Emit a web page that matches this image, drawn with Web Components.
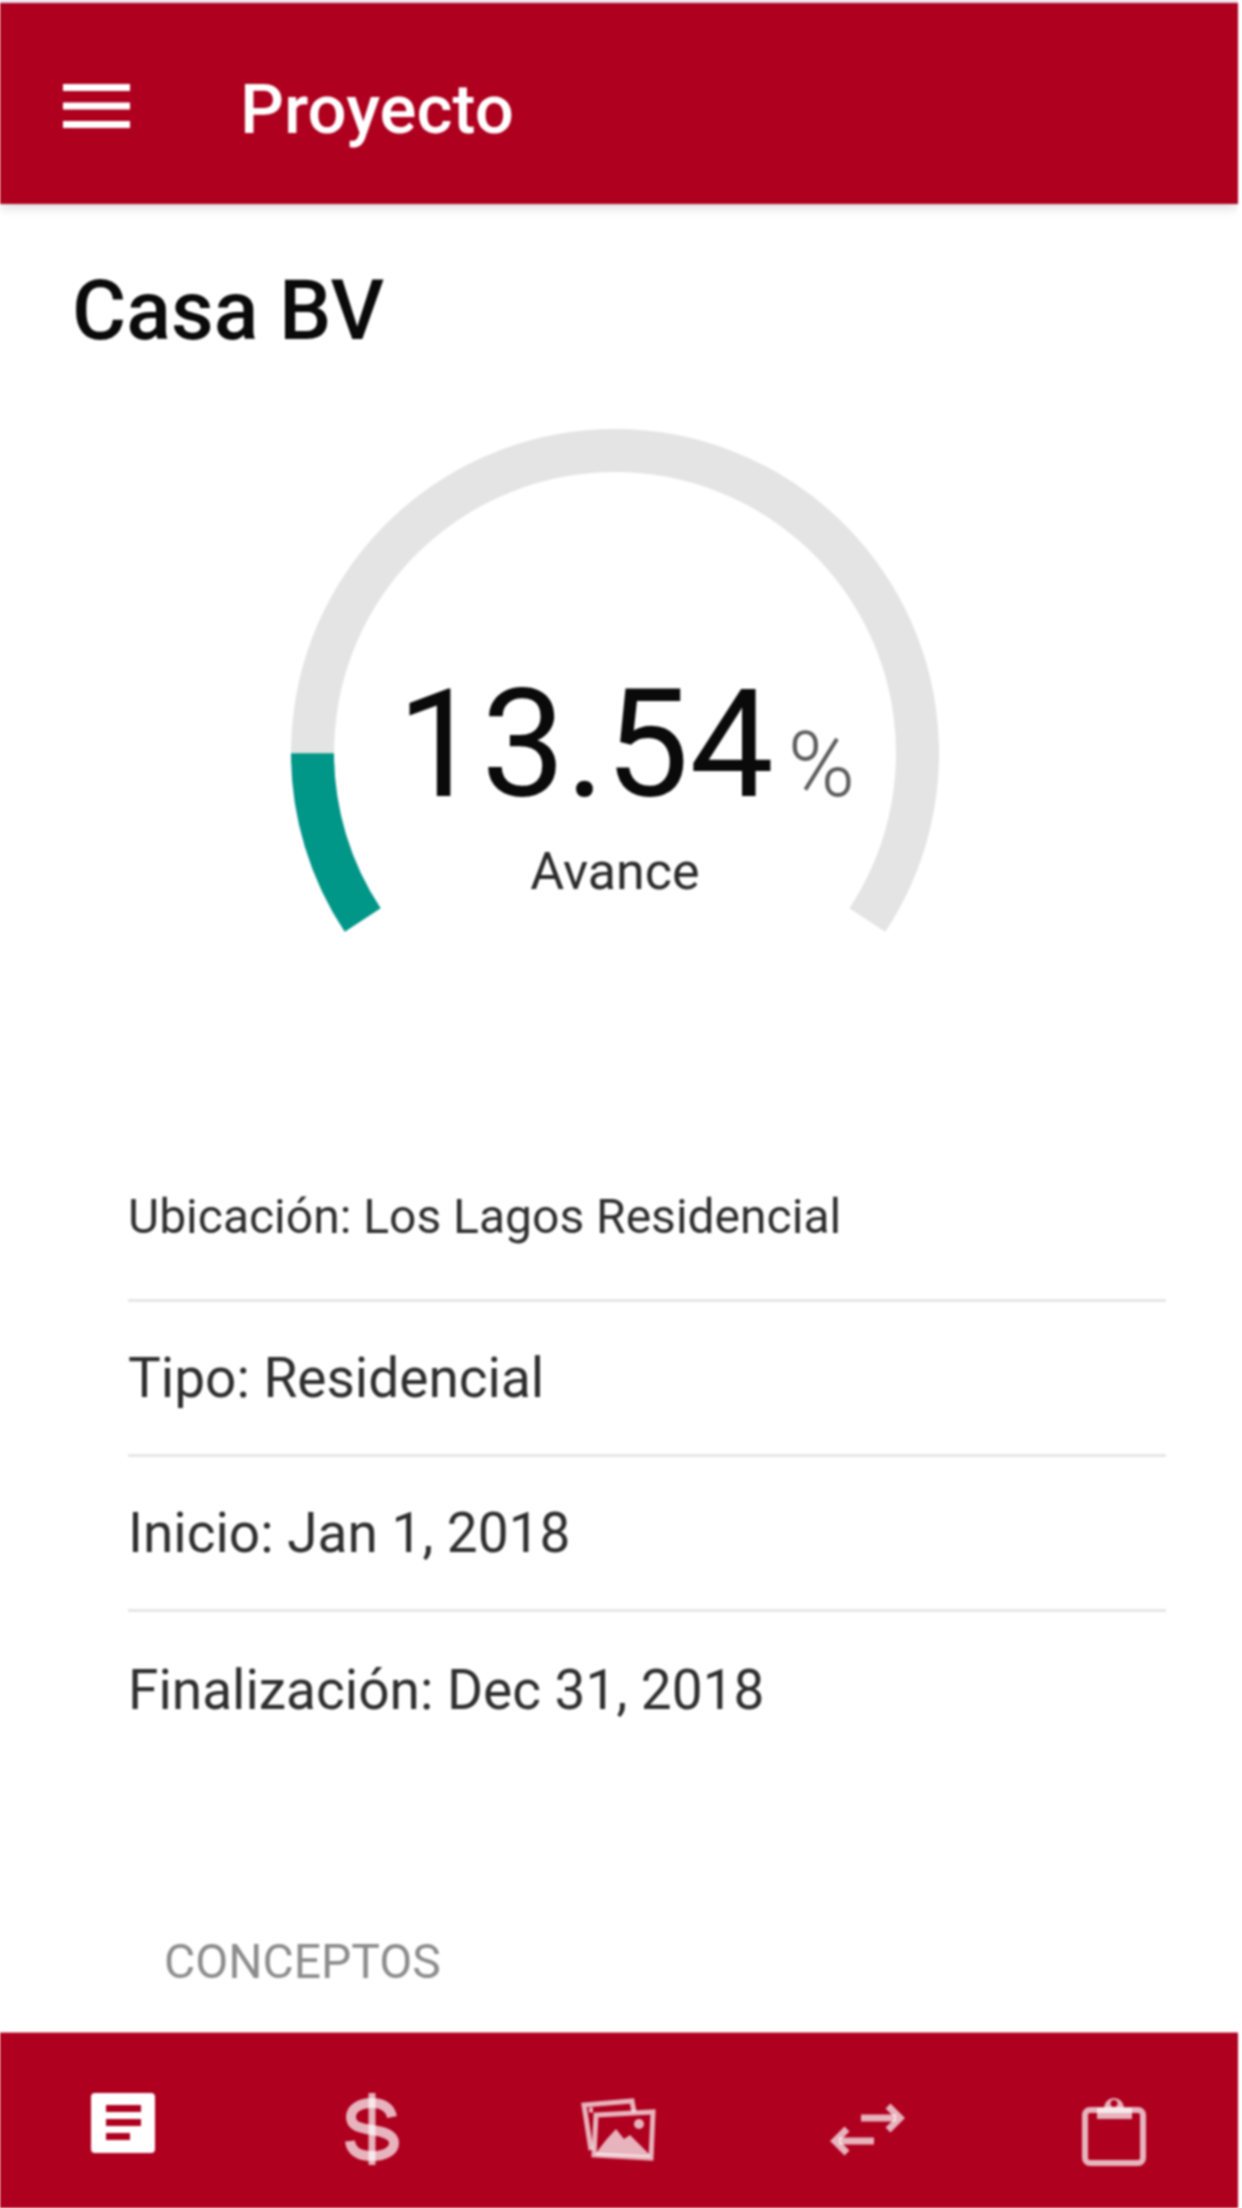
<!DOCTYPE html>
<html lang="es">
<head>
<meta charset="utf-8">
<title>Proyecto</title>
<style>
    html, body {
        margin: 0;
        padding: 0;
        background: #ffffff;
    }
</style>
</head>
<body>
<app-shell>
    <app-toolbar slot="top">Proyecto</app-toolbar>
    <project-title>Casa BV</project-title>
    <progress-gauge value="13.54" label="Avance"></progress-gauge>
    <info-list>
        <info-row small>Ubicación: Los Lagos Residencial</info-row>
        <info-row>Tipo: Residencial</info-row>
        <info-row>Inicio: Jan 1, 2018</info-row>
        <info-row last>Finalización: Dec 31, 2018</info-row>
    </info-list>
    <section-link>CONCEPTOS</section-link>
    <tab-bar slot="bottom">
        <tab-icon name="article" active></tab-icon>
        <tab-icon name="dollar"></tab-icon>
        <tab-icon name="images"></tab-icon>
        <tab-icon name="swap"></tab-icon>
        <tab-icon name="clipboard"></tab-icon>
    </tab-bar>
</app-shell>
<script>
const RED = '#af001f';

const shellTemplate = document.createElement('template');
shellTemplate.innerHTML = `
    <style>
        :host {
            display: flex;
            flex-direction: column;
            width: 1238px;
            height: 2208px;
            box-sizing: border-box;
            border-top: 3px solid #e7e0ea;
            overflow: hidden;
            background: #ffffff;
            font-family: Roboto, "Liberation Sans", sans-serif;
            filter: blur(1.1px);
        }
        .content {
            flex: 1;
            min-height: 0;
            overflow: hidden;
        }
    </style>
    <slot name="top"></slot>
    <div class="content"><slot></slot></div>
    <slot name="bottom"></slot>
`;
class AppShell extends HTMLElement {
    constructor () {
        super();
        this.attachShadow({ mode: 'open' }).appendChild(shellTemplate.content.cloneNode(true));
    }
}

const toolbarTemplate = document.createElement('template');
toolbarTemplate.innerHTML = `
    <style>
        :host {
            display: flex;
            align-items: center;
            height: 201px;
            box-sizing: border-box;
            padding: 5px 0 0 63px;
            gap: 110px;
            background: ${RED};
            color: #ffffff;
            box-shadow: 0 4px 10px rgba(0, 0, 0, 0.14);
            position: relative;
        }
        svg {
            display: block;
            flex: none;
        }
        .title {
            font-size: 69px;
            line-height: 80px;
            font-weight: 500;
            margin-top: 8px;
        }
    </style>
    <svg width="67" height="44" viewBox="0 0 67 44" fill="#ffffff">
        <rect y="0" width="67" height="7"></rect>
        <rect y="18.5" width="67" height="7"></rect>
        <rect y="37" width="67" height="7"></rect>
    </svg>
    <div class="title"><slot></slot></div>
`;
class AppToolbar extends HTMLElement {
    constructor () {
        super();
        this.attachShadow({ mode: 'open' }).appendChild(toolbarTemplate.content.cloneNode(true));
    }
}

const titleTemplate = document.createElement('template');
titleTemplate.innerHTML = `
    <style>
        :host {
            display: block;
            margin: 59px 0 0 72px;
            font-size: 83px;
            line-height: 96px;
            font-weight: 500;
            color: #0a0a0a;
        }
    </style>
    <slot></slot>
`;
class ProjectTitle extends HTMLElement {
    constructor () {
        super();
        this.attachShadow({ mode: 'open' }).appendChild(titleTemplate.content.cloneNode(true));
    }
}

const gaugeTemplate = document.createElement('template');
gaugeTemplate.innerHTML = `
    <style>
        :host {
            display: block;
            position: relative;
            width: 648px;
            height: 510px;
            margin: 70px 0 0 291px;
        }
        svg {
            display: block;
        }
        .center {
            position: absolute;
            left: 0;
            right: 0;
            top: 243px;
            display: flex;
            flex-direction: column;
            align-items: center;
        }
        .value-line {
            display: flex;
            align-items: baseline;
            gap: 14px;
            margin-left: 22px;
        }
        .value {
            font-size: 150px;
            line-height: 147px;
            font-weight: 400;
            color: #0a0a0a;
        }
        .unit {
            font-size: 91px;
            line-height: 88px;
            font-weight: 300;
            color: #5c5c5c;
        }
        .label {
            margin-top: 23px;
            font-size: 52px;
            line-height: 60px;
            color: #2a2a2a;
        }
    </style>
    <svg width="648" height="510" viewBox="0 0 648 510" fill="none" stroke-width="43">
        <path class="track" stroke="#e4e4e4"></path>
        <path class="bar" stroke="#009688"></path>
    </svg>
    <div class="center">
        <div class="value-line"><span class="value"></span><span class="unit">%</span></div>
        <div class="label"></div>
    </div>
`;
class ProgressGauge extends HTMLElement {
    constructor () {
        super();
        this._shadow = this.attachShadow({ mode: 'open' });
        this._shadow.appendChild(gaugeTemplate.content.cloneNode(true));
    }

    connectedCallback () {
        const value = parseFloat(this.getAttribute('value'));
        this._shadow.querySelector('.value').textContent = this.getAttribute('value');
        this._shadow.querySelector('.label').textContent = this.getAttribute('label');

        // the arc starts under the horizontal on the left and sweeps up and over
        const start = 33.5;
        const sweep = 247;
        const r = 302.5;
        const point = (deg) => {
            const rad = deg * Math.PI / 180;
            return (324 - r * Math.cos(rad)).toFixed(1) + ' ' + (324 + r * Math.sin(rad)).toFixed(1);
        };
        const end = start - sweep * value / 100;
        this._shadow.querySelector('.track').setAttribute('d',
            `M${point(start)} A${r} ${r} 0 1 1 ${point(start - sweep)}`);
        this._shadow.querySelector('.bar').setAttribute('d',
            `M${point(start)} A${r} ${r} 0 0 1 ${point(end)}`);
    }
}

const listTemplate = document.createElement('template');
listTemplate.innerHTML = `
    <style>
        :host {
            display: flex;
            flex-direction: column;
            margin: 208px 72px 0 128px;
        }
    </style>
    <slot></slot>
`;
class InfoList extends HTMLElement {
    constructor () {
        super();
        this.attachShadow({ mode: 'open' }).appendChild(listTemplate.content.cloneNode(true));
    }
}

const rowTemplate = document.createElement('template');
rowTemplate.innerHTML = `
    <style>
        :host {
            display: flex;
            align-items: center;
            height: 155px;
            box-sizing: border-box;
            border-bottom: 3px solid #e6e6e6;
            font-size: 55px;
            color: #2e2e2e;
            white-space: nowrap;
        }
        :host([small]) {
            font-size: 48px;
            padding-bottom: 14px;
        }
        :host([last]) {
            border-bottom: none;
        }
    </style>
    <slot></slot>
`;
class InfoRow extends HTMLElement {
    constructor () {
        super();
        this.attachShadow({ mode: 'open' }).appendChild(rowTemplate.content.cloneNode(true));
    }
}

const linkTemplate = document.createElement('template');
linkTemplate.innerHTML = `
    <style>
        :host {
            display: block;
            margin: 167px 0 0 164px;
            font-size: 48px;
            line-height: 56px;
            color: #8c8c8c;
        }
    </style>
    <slot></slot>
`;
class SectionLink extends HTMLElement {
    constructor () {
        super();
        this.attachShadow({ mode: 'open' }).appendChild(linkTemplate.content.cloneNode(true));
    }
}

const tabBarTemplate = document.createElement('template');
tabBarTemplate.innerHTML = `
    <style>
        :host {
            display: grid;
            grid-template-columns: repeat(5, 1fr);
            height: 176px;
            box-sizing: border-box;
            padding-top: 47px;
            background: ${RED};
            border-top: 1px solid #d98a98;
            position: relative;
        }
    </style>
    <slot></slot>
`;
class TabBar extends HTMLElement {
    constructor () {
        super();
        this.attachShadow({ mode: 'open' }).appendChild(tabBarTemplate.content.cloneNode(true));
    }
}

// all of them drawn in a 100x100 box
const ICONS = {
    article: `<path fill="currentColor" fill-rule="evenodd" d="M21 13H77a4 4 0 0 1 4 4V69a4 4 0 0 1-4 4H21a4 4 0 0 1-4-4V17a4 4 0 0 1 4-4Z
        M32 25V32H67V25Z M32 39V46H67V39Z M32 53V60H56V53Z"/>`,
    dollar: `<g fill="none" stroke="currentColor">
        <path stroke-width="10" d="M71 37C69 27 61 23 51 23C38 23 30 29 30 37C30 46 38 48 51 50C64 52 73 55 73 63C73 71 64 76 51 76C38 76 30 71 29 61"/>
        <path stroke-width="7" d="M51 13V85"/>
    </g>`,
    images: `<g fill="none" stroke="currentColor" stroke-width="5">
        <path d="M22 70L15 25L63 21L65 32"/>
        <path d="M27 35L84 32L82 78L25 75Z"/>
        <path d="M20 30H24"/>
    </g>
    <path fill="currentColor" d="M27 73L37 60L47 49L55 59L61 55L81 75V77L26 75Z"/>
    <circle cx="70" cy="44" r="5" fill="currentColor"/>`,
    swap: `<g fill="none" stroke="currentColor" stroke-width="7" transform="translate(4 0)">
        <path d="M40 38H75"/>
        <path d="M67 26L79 38L67 50"/>
        <path d="M53 61H18"/>
        <path d="M26 49L14 61L26 73"/>
    </g>`,
    clipboard: `<rect x="21" y="30" width="58" height="53" rx="5" fill="none" stroke="currentColor" stroke-width="6"/>
    <path fill="currentColor" fill-rule="evenodd" d="M33 28H40A10 10 0 0 1 60 28H68V39H33Z M50 20A3.5 3.5 0 1 0 50 27A3.5 3.5 0 1 0 50 20Z"/>`
};

const tabIconTemplate = document.createElement('template');
tabIconTemplate.innerHTML = `
    <style>
        :host {
            display: flex;
            justify-content: center;
            align-items: flex-start;
            color: rgba(255, 255, 255, 0.7);
        }
        :host([active]) {
            color: #ffffff;
        }
        svg {
            display: block;
        }
    </style>
    <svg width="100" height="100" viewBox="0 0 100 100"></svg>
`;
class TabIcon extends HTMLElement {
    constructor () {
        super();
        this._shadow = this.attachShadow({ mode: 'open' });
        this._shadow.appendChild(tabIconTemplate.content.cloneNode(true));
    }

    connectedCallback () {
        this._shadow.querySelector('svg').innerHTML = ICONS[this.getAttribute('name')];
    }
}

customElements.define('app-shell', AppShell);
customElements.define('app-toolbar', AppToolbar);
customElements.define('project-title', ProjectTitle);
customElements.define('progress-gauge', ProgressGauge);
customElements.define('info-list', InfoList);
customElements.define('info-row', InfoRow);
customElements.define('section-link', SectionLink);
customElements.define('tab-bar', TabBar);
customElements.define('tab-icon', TabIcon);
</script>
</body>
</html>
